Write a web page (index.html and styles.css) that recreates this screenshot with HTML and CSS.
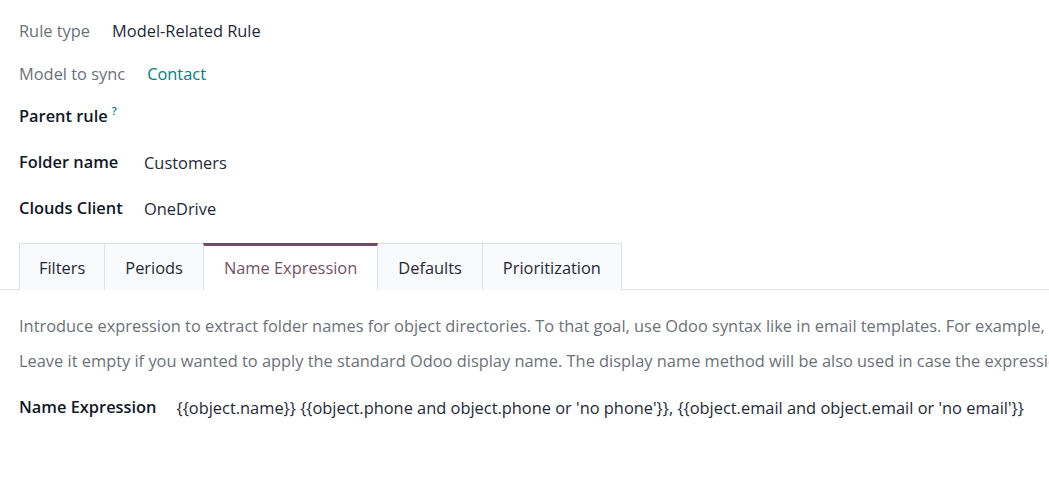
FILE: index.html
```html
<!DOCTYPE html>
<html>
<head>
<meta charset="utf-8">
<link rel="stylesheet" href="styles.css">
</head>
<body>
<div class="sheet">
  <div class="inline-row r1">
    <span class="muted-label">Rule type</span>
    <span class="value">Model-Related Rule</span>
  </div>
  <div class="inline-row r2">
    <span class="muted-label">Model to sync</span>
    <span class="value link">Contact</span>
  </div>
  <div class="inline-row r3">
    <span class="bold-label">Parent rule<sup class="help">?</sup></span>
  </div>
  <div class="grid-fields">
    <div class="grid-row">
      <span class="bold-label">Folder name</span>
      <span class="value low">Customers</span>
    </div>
    <div class="grid-row">
      <span class="bold-label">Clouds Client</span>
      <span class="value low">OneDrive</span>
    </div>
  </div>

  <div class="tabs">
    <div class="tab first">Filters</div>
    <div class="tab">Periods</div>
    <div class="tab active">Name Expression</div>
    <div class="tab">Defaults</div>
    <div class="tab last">Prioritization</div>
  </div>

  <div class="pane">
    <p class="desc">Introduce expression to extract folder names for object directories. To that goal, use Odoo syntax like in email templates. For example, "{{object.name}} {{object.phone}}"</p>
    <p class="desc">Leave it empty if you wanted to apply the standard Odoo display name. The display name method will be also used in case the expression is not set</p>
    <div class="expr-row">
      <span class="bold-label">Name Expression</span>
      <span class="value low">{{object.name}} {{object.phone and object.phone or 'no phone'}}, {{object.email and object.email or 'no email'}}</span>
    </div>
  </div>
</div>
</body>
</html>
```
FILE: styles.css
```css
html, body {
  margin: 0;
  padding: 0;
  background: #ffffff;
  overflow: hidden;
}
body {
  font-family: "Open Sans", "Noto Sans", sans-serif;
  font-size: 16.4px;
  color: #1f2937;
}
.sheet {
  width: 1049px;
  overflow: hidden;
  padding-top: 9px;
}
.inline-row {
  display: flex;
  align-items: center;
  gap: 22px;
  padding-left: 19px;
  white-space: nowrap;
}
.r1 { height: 43px; }
.r2 { height: 42px; }
.r3 { height: 42px; }
.muted-label { color: #6b7178; }
.bold-label {
  font-weight: 600;
  color: #111827;
  white-space: nowrap;
}
.value { color: #1f2937; white-space: nowrap; }
.value.low { padding-top: 3px; }
.link { color: #017e84; }
.help {
  color: #017e84;
  font-size: 11px;
  font-weight: 600;
  margin-left: 4px;
  vertical-align: 7px;
  line-height: 0;
}
.grid-fields {
  display: grid;
  grid-template-columns: 125px auto;
  padding-left: 19px;
  padding-top: 2px;
}
.grid-row { display: contents; }
.grid-row > span {
  box-sizing: border-box;
  height: 46px;
  display: flex;
  align-items: center;
}
.tabs {
  display: flex;
  margin-top: 13px;
  padding-left: 19px;
  border-bottom: 1px solid #dee2e6;
  height: 46px;
}
.tab {
  box-sizing: border-box;
  height: 47px;
  padding: 0 20px;
  display: flex;
  align-items: center;
  background: #f9fafb;
  border-top: 1px solid #dee2e6;
  border-left: 1px solid #dee2e6;
  color: #1f2937;
  white-space: nowrap;
}
.tab.first { padding: 0 19px; }
.tab.last { border-right: 1px solid #dee2e6; }
.tab.active {
  background: #ffffff;
  border-top: 3px solid #714b67;
  border-right: 1px solid #dee2e6;
  color: #6f5369;
  padding-bottom: 1px;
  position: relative;
  z-index: 1;
}
.tab.active + .tab { border-left: none; }
.pane {
  padding: 18px 0 0 19px;
}
.desc {
  margin: 0;
  height: 35px;
  line-height: 35px;
  color: #6b7178;
  white-space: nowrap;
}
.expr-row {
  display: flex;
  align-items: center;
  gap: 20px;
  height: 46px;
  margin-top: 5px;
}
```
